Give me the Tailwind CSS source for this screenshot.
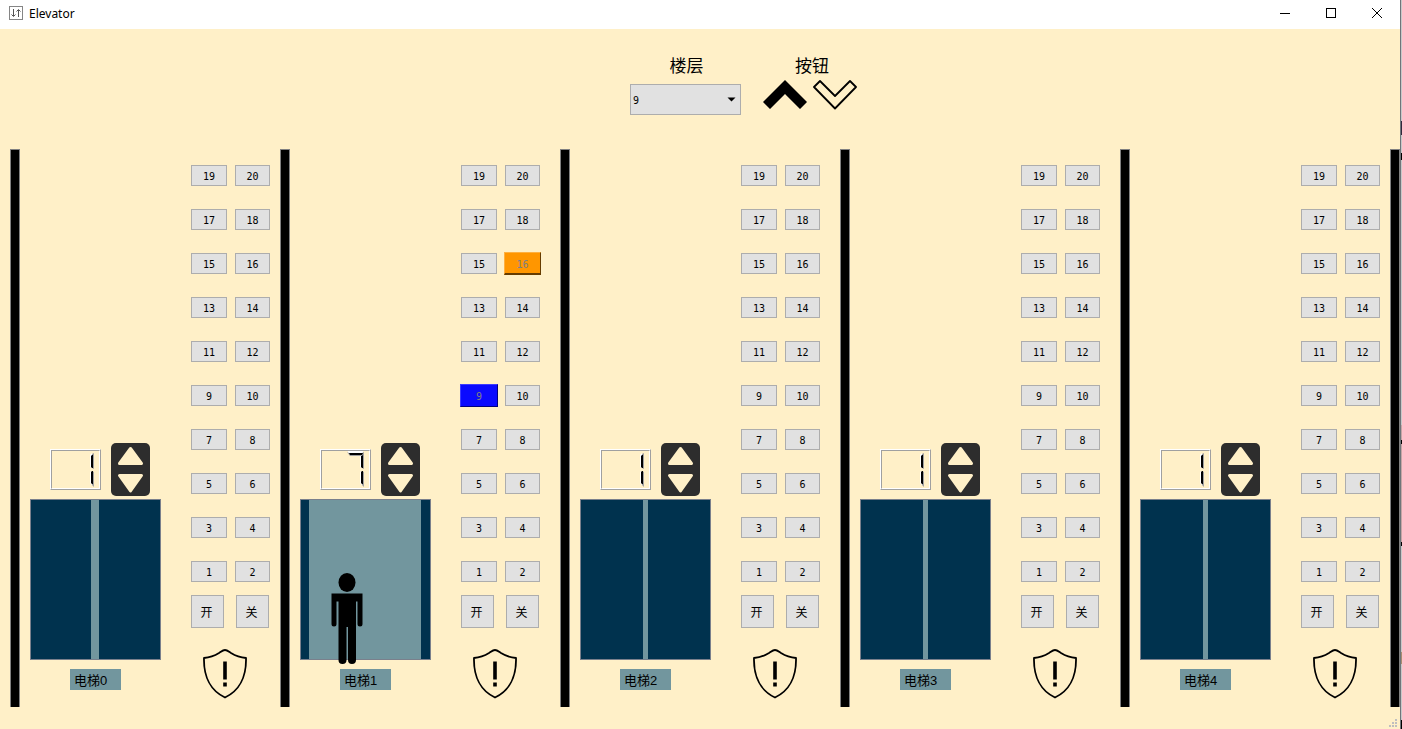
<!DOCTYPE html>
<html lang="zh-CN">
<head>
<meta charset="utf-8">
<title>Elevator</title>
<script src="https://cdn.jsdelivr.net/npm/@tailwindcss/browser@4"></script>
</head>
<body class="flex min-h-screen bg-[#fff0c8] font-['Liberation_Sans','Noto_Sans_CJK_SC',sans-serif] text-black">
<svg class="hidden" aria-hidden="true">
  <symbol id="indicator" viewBox="0 0 39 53">
    <rect width="39" height="53" rx="5" fill="#2d2d2d"/>
    <g fill="#fff0c8" stroke="#fff0c8" stroke-width="3" stroke-linejoin="round">
      <path d="M19.5 5.5L30.5 20.5H8.500z"/>
      <path d="M19.5 48L30.500 32.500H8.500z"/>
    </g>
  </symbol>
  <symbol id="shield" viewBox="0 0 44 50">
    <path d="M22 1C24 1 25 2 28 4C32 6.500 37 8.500 43 9C43.500 28 36 42 22 48.500C8 42 .5 28 1 9C7 8.500 12 6.500 16 4C19 2 20 1 22 1z" fill="none" stroke="#000" stroke-width="1.800" stroke-linejoin="round"/>
    <path d="M20.200 12.500h3.600v18h-3.600zM20.200 33.500h3.600v4h-3.600z"/>
  </symbol>
  <symbol id="person" viewBox="0 0 32 91">
    <ellipse cx="16" cy="9.500" rx="8.500" ry="9.500"/>
    <path d="M.5 20.500H31.500V51a2.500 2.500 0 0 1-5 0V28.500H25V87a3.900 3.900 0 0 1-8 0V54H15.500V87a3.900 3.900 0 0 1-8 0V28.500H5.500V51a2.500 2.500 0 0 1-5 0z"/>
  </symbol>
</svg>

<div class="flex min-w-0 flex-1 flex-col">
  <header class="flex h-[29px] items-center bg-white pb-[3px] pl-2">
    <svg class="size-4" viewBox="0 0 16 16" fill="none"><rect x="1.500" y="1.500" width="13" height="13" stroke="#858585"/><path d="M5.500 4v7M3.500 9.500l2 2 2-2M10.500 12V5M8.500 6.500l2-2 2 2" stroke="#555"/></svg>
    <h1 class="ml-[5px] flex-1 pt-px font-['Noto_Sans',sans-serif] text-xs">Elevator</h1>
    <button aria-label="最小化" class="flex h-full w-[46px] items-center justify-center"><svg class="size-3" viewBox="0 0 12 12"><path d="M1 6.500h10" stroke="#000"/></svg></button>
    <button aria-label="最大化" class="flex h-full w-[46px] items-center justify-center"><svg class="size-3" viewBox="0 0 12 12" fill="none"><rect x="1.500" y="1.500" width="9" height="9" stroke="#000"/></svg></button>
    <button aria-label="关闭" class="flex h-full w-[46px] items-center justify-center"><svg class="size-3" viewBox="0 0 12 12"><path d="M1 1l10 10M11 1L1 11" stroke="#000"/></svg></button>
  </header>

  <main class="flex flex-1 flex-col">
    <section class="flex h-[120px] justify-center gap-[22px] pt-[26px] pl-[87px]">
      <div class="flex w-[111px] flex-col items-center">
        <label for="floor" class="h-[29px] pl-0.5 text-[17px] leading-6">楼层</label>
        <div class="relative w-full">
          <select id="floor" class="h-[31px] w-full appearance-none border border-[#adadad] bg-[#e1e1e1] px-0.5 pt-0.5 font-['DejaVu_Sans_Mono',monospace] text-[10px]"><option>9</option></select>
          <svg class="pointer-events-none absolute top-[13px] right-[5px] h-[5px] w-[9px]" viewBox="0 0 9 5"><path d="M.5 .5h8l-4 4z"/></svg>
        </div>
      </div>
      <div class="flex flex-col">
        <span class="h-[25px] pl-1 text-center text-[17px] leading-6">按钮</span>
        <div class="flex gap-1.5">
          <button aria-label="上行"><svg class="h-[30px] w-11" viewBox="0 0 44 30"><path d="M22 0L44 22L37 29L22 14L7 29L0 22z"/></svg></button>
          <button aria-label="下行"><svg class="h-[30px] w-11" viewBox="0 0 44 30" fill="none"><path d="M7 1L22 16L37 1L43 7L22 28.500L1 7z" stroke="#000" stroke-width="1.800" stroke-linejoin="round"/></svg></button>
        </div>
      </div>
    </section>
    <section id="shafts" class="flex pl-2.5"></section>
    <div class="mt-auto flex justify-end pr-[3px] pb-0.5">
      <svg class="size-2" viewBox="0 0 8 8" fill="#bfbfbf"><path d="M6 0h2v2h-2zM3 3h2v2h-2zM6 3h2v2h-2zM0 6h2v2h-2zM3 6h2v2h-2zM6 6h2v2h-2z"/></svg>
    </div>
  </main>
</div>
<aside class="flex w-0.5 flex-col border-l border-[#70757a] bg-[#c8c8c8]" aria-hidden="true">
  <i class="mt-[121px] h-[14px] bg-[#32283c]"></i><i class="mt-[18px] h-[7px] bg-black"></i>
  <i class="mt-[265px] h-[15px] bg-[#c6a5a5]"></i><i class="h-1 bg-black"></i>
  <i class="h-[98px] bg-[#c6a5a5]"></i><i class="h-1 bg-black"></i>
  <i class="mt-[106px] h-3 bg-[#a88c70]"></i><i class="mt-auto h-[9px] bg-black"></i>
</aside>

<script>
const lifts = [
  { floor: 1, lane: 'flex-[27]', doors: 'ml-[60px] w-2' },
  { floor: 7, lane: 'flex-[28]', doors: 'ml-2 w-28', rider: true, calls: { 9: 'blue', 16: 'orange' } },
  { floor: 1, lane: 'flex-[28]', doors: 'ml-[62px] w-[5px]' },
  { floor: 1, lane: 'flex-[28]', doors: 'ml-[62px] w-[5px]' },
  { floor: 1, lane: 'flex-[27]', doors: 'ml-[62px] w-[5px]' },
];
const order = [19, 20, 17, 18, 15, 16, 13, 14, 11, 12, 9, 10, 7, 8, 5, 6, 3, 4, 1, 2];
const looks = {
  plain: 'h-[21px] border border-[#adadad] bg-[#e1e1e1] pt-0.5',
  blue: '-mx-px -my-px h-[23px] border border-t-[#3c3cff] border-l-[#3c3cff] border-r-[#000080] border-b-[#000080] bg-[#0a0aff] pt-0.5 text-[#808080]',
  orange: '-mx-px -my-px h-[23px] border-t border-l border-r border-b-2 border-t-[#ffb040] border-l-[#ffb040] border-r-[#663c00] border-b-[#663c00] bg-[#ff9600] pt-0.5 text-[#808080]',
};

document.getElementById('shafts').innerHTML = lifts.map((lift, i) => `
  <article class="${lift.lane} flex h-[558px] border-l border-[#808080]">
    <div class="w-2 shrink-0 border-t border-[#808080] bg-black"></div>
    <div class="w-px shrink-0 bg-[#808080]"></div>
    <div class="ml-2.5 flex w-[131px] shrink-0 flex-col pt-[294px]">
      <div class="flex h-14 gap-2.5 pl-5">
        <div class="mt-1.5 h-[41px] w-[51px] border border-t-white border-l-white border-r-[#a0a0a0] border-b-[#a0a0a0]">
          <div class="h-full border border-t-[#a0a0a0] border-l-[#a0a0a0] border-r-white border-b-white">
            <svg class="-mt-0.5 -ml-0.5 h-[41px] w-[51px]" viewBox="0 0 51 41" role="img" aria-label="${lift.floor}">
              <path d="M40 6L42 4V19L40 18zM40 23L42 22V36L40 34z" fill="#fff"/>
              <path d="M42 5L44 4V20L42 19zM42 22L44 23V38L42 36z" fill="#a0a0a0"/>
              <path d="M41 7L42 6H43V19H42L41 18zM41 23L42 22H43V35H42L41 34z" fill="#000"/>
              ${lift.floor === 7 ? '<path d="M28 2H43V4H28z" fill="#fff"/><path d="M27 3L30 7H42L44 4V3L42 4H29z" fill="#a0a0a0"/><path d="M29 4H43L42 6H30z" fill="#000"/>' : ''}
            </svg>
          </div>
        </div>
        <svg class="h-[53px] w-[39px]" role="img" aria-label="运行方向"><use href="#indicator"/></svg>
      </div>
      <div class="relative h-[161px] border border-[#7a808c] bg-[#00324e]">
        <div class="${lift.doors} h-full bg-[#72969e]"></div>
        ${lift.rider ? '<svg class="absolute top-[73px] left-[30px] h-[91px] w-8" role="img" aria-label="乘客"><use href="#person"/></svg>' : ''}
      </div>
      <h2 class="mt-[9px] ml-10 h-[21px] w-[51px] bg-[#72969e] pl-1 text-[13px] leading-[23px]">电梯${i}</h2>
    </div>
    <div class="ml-[30px] flex w-[79px] shrink-0 flex-col pt-4">
      <div class="grid grid-cols-[36px_35px] gap-x-2 gap-y-[23px] font-['DejaVu_Sans_Mono',monospace] text-[10px]">
        ${order.map(n => `<button class="${looks[(lift.calls || {})[n] || 'plain']}">${n}</button>`).join('')}
      </div>
      <div class="mt-[13px] flex gap-3 text-xs">
        <button class="size-[33px] border border-[#adadad] bg-[#e1e1e1] pt-0.5 pr-0.5">开</button>
        <button class="size-[33px] border border-[#adadad] bg-[#e1e1e1] pt-0.5 pr-0.5">关</button>
      </div>
      <button class="mt-[21px] ml-3 h-[50px] w-11" aria-label="报警"><svg class="size-full"><use href="#shield"/></svg></button>
    </div>
  </article>`).join('') + '<div class="w-2.5 border border-b-0 border-[#808080] bg-black"></div>';
</script>
</body>
</html>
